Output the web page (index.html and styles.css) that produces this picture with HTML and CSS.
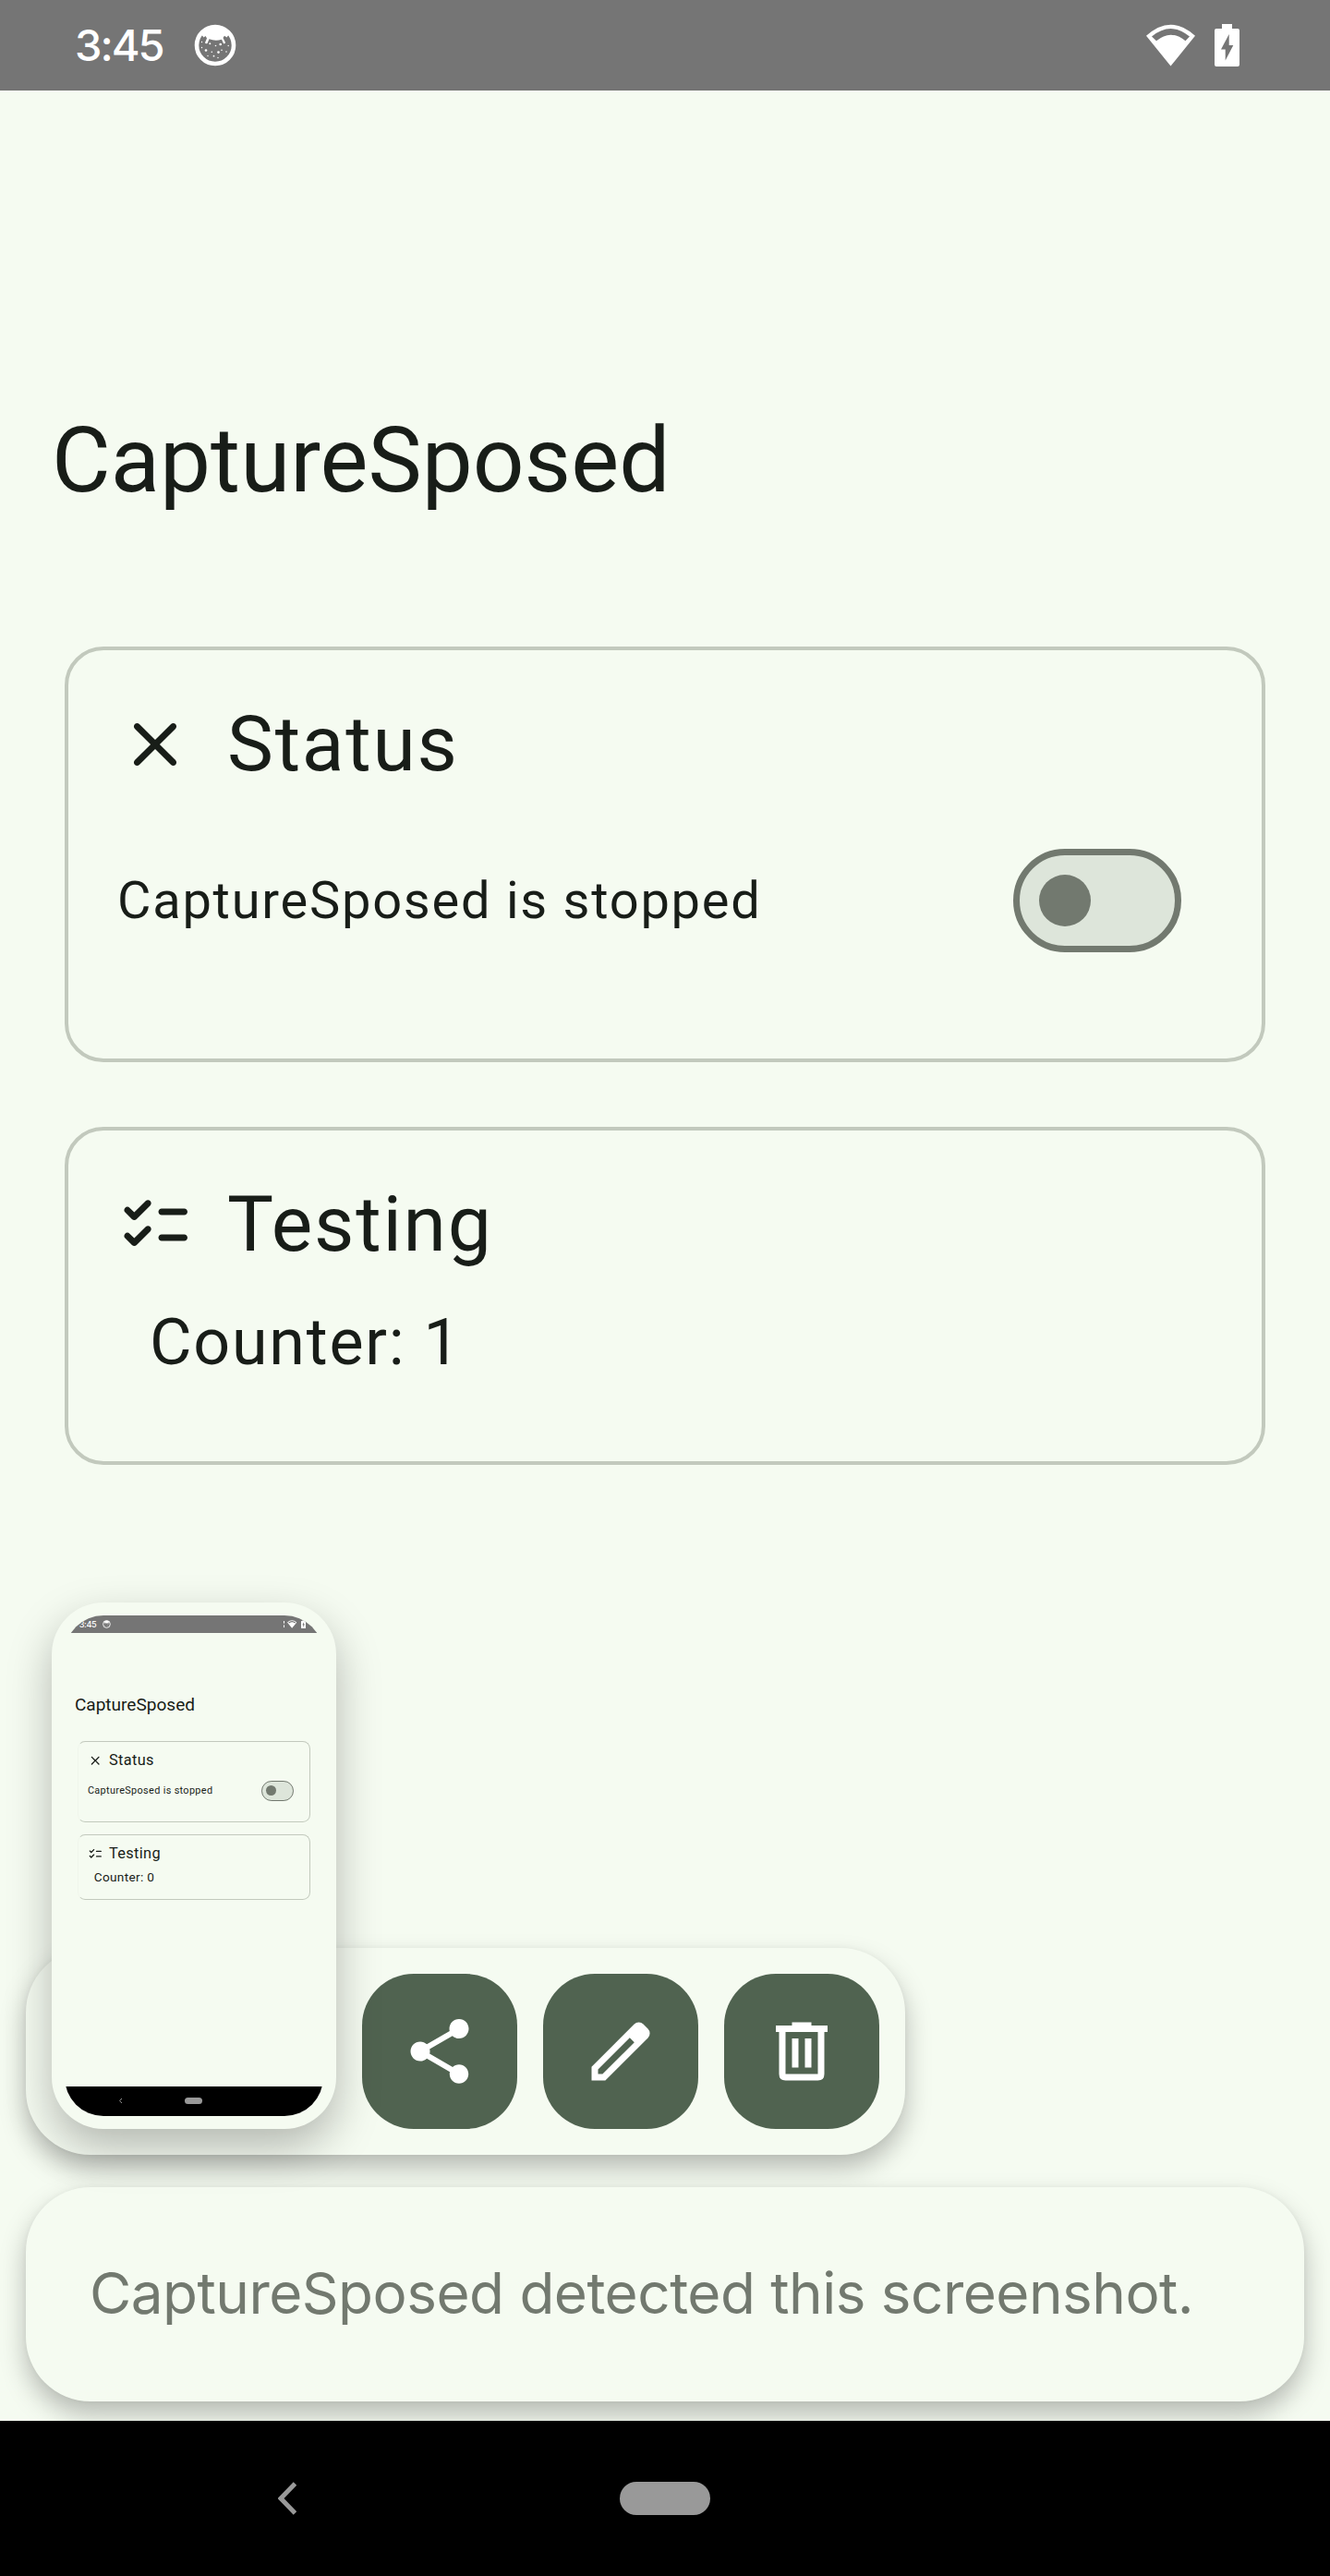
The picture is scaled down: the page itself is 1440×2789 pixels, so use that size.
FILE: index.html
```html
<!DOCTYPE html>
<html lang="en">
<head>
<meta charset="utf-8">
<title>CaptureSposed</title>
<link rel="stylesheet" href="styles.css">
</head>
<body>
<svg class="sprite" aria-hidden="true">
  <symbol id="i-cat" viewBox="0 0 46 46">
    <circle cx="23" cy="23" r="20" fill="none" stroke="currentColor" stroke-width="4.6"/>
    <path fill="currentColor" d="M7.5 10.5C16 1 30 1 38.500 10.500L35.500 14.500L33 12.800L31.500 15L34 20Q34 21.500 32 21.300L30 16.800Q23 19 16.500 16.300L14.500 21Q12.500 21.500 12 20.300L14 15.500L12.500 13L10.500 14.500Z"/>
    <g fill="currentColor"><circle cx="17.300" cy="21.300" r="1"/><circle cx="23.500" cy="23.500" r=".8"/><circle cx="28.700" cy="22" r="1.300"/><circle cx="13" cy="28.500" r="1.300"/><circle cx="8.500" cy="25.500" r=".7"/><circle cx="8.500" cy="19.500" r=".7"/><circle cx="30" cy="28.200" r=".8"/><circle cx="26.500" cy="30.600" r="1.300"/><circle cx="19.300" cy="30.200" r=".8"/><circle cx="21.500" cy="34.700" r=".9"/><circle cx="15" cy="34.500" r=".7"/><circle cx="26" cy="36.500" r=".7"/><circle cx="35" cy="30" r=".8"/><circle cx="37.200" cy="23.500" r=".7"/></g>
  </symbol>
  <symbol id="i-wifi" viewBox="0 0 53 46">
    <path fill="currentColor" fill-rule="evenodd" d="M26.500 45.500L0 12.800Q26.500 -11.500 53 12.800ZM6 13.500L11 18.300Q26.500 5 42.500 18.300L47 13.500Q26.500 -3.500 6 13.500Z"/>
  </symbol>
  <symbol id="i-battery" viewBox="0 0 27 46">
    <path fill="currentColor" fill-rule="evenodd" d="M8 0H19V5H25Q27 5 27 7V44Q27 46 25 46H2Q0 46 0 44V7Q0 5 2 5H8ZM15.700 11L7 27.500H11.700V39.500L20.300 23H15.700Z"/>
  </symbol>
  <symbol id="i-close" viewBox="0 0 24 24">
    <path fill="currentColor" d="M18.300 5.710c-.39-.39-1.020-.39-1.410 0L12 10.590 7.110 5.700c-.39-.39-1.020-.39-1.410 0s-.39 1.020 0 1.410L10.590 12 5.700 16.890c-.39.39-.39 1.020 0 1.410s1.020.39 1.410 0L12 13.410l4.890 4.890c.39.39 1.020.39 1.410 0s.39-1.020 0-1.410L13.410 12l4.890-4.890c.38-.38.38-1.020 0-1.400z"/>
  </symbol>
  <symbol id="i-checklist" viewBox="0 0 24 24">
    <path fill="currentColor" d="M22 8c0-.55-.45-1-1-1h-7c-.55 0-1 .45-1 1s.45 1 1 1h7c.55 0 1-.45 1-1zm-9 8c0 .55.45 1 1 1h7c.55 0 1-.45 1-1s-.45-1-1-1h-7c-.55 0-1 .45-1 1zM10.470 4.630c.39.39.39 1.020 0 1.410l-4.230 4.250c-.39.39-1.020.39-1.420 0L2.700 8.160c-.39-.39-.39-1.020 0-1.410s1.020-.39 1.410 0l1.420 1.420 3.540-3.540c.38-.38 1.020-.38 1.400 0zm.01 8.010c.39.39.39 1.020 0 1.410L6.250 18.300c-.39.39-1.020.39-1.420 0L2.700 16.160c-.39-.39-.39-1.020 0-1.410s1.020-.39 1.410 0l1.420 1.420 3.540-3.540c.38-.38 1.020-.38 1.410.01z"/>
  </symbol>
  <symbol id="i-share" viewBox="0 0 24 24">
    <path fill="currentColor" d="M18 16.080c-.76 0-1.440.3-1.960.77L8.910 12.700c.05-.23.09-.46.09-.7s-.04-.47-.09-.7l7.050-4.110c.54.5 1.250.81 2.040.81 1.660 0 3-1.340 3-3s-1.340-3-3-3-3 1.340-3 3c0 .24.04.47.09.7L8.040 9.810C7.500 9.310 6.790 9 6 9c-1.660 0-3 1.340-3 3s1.340 3 3 3c.79 0 1.500-.31 2.040-.81l7.120 4.160c-.05.21-.08.43-.08.650 0 1.610 1.310 2.920 2.920 2.920s2.920-1.310 2.920-2.920-1.310-2.920-2.920-2.920z"/>
  </symbol>
  <symbol id="i-edit" viewBox="0 0 24 24">
    <path fill="currentColor" fill-rule="evenodd" d="M3 21V16.750L16.200 3.570A2 2 0 0 1 19 3.570L20.430 5A2 2 0 0 1 20.430 7.830L7.250 21ZM5 17.600V19H6.400L16.230 9.200L14.800 7.770Z"/>
  </symbol>
  <symbol id="i-delete" viewBox="0 0 24 24">
    <path fill="currentColor" fill-rule="evenodd" d="M7 21Q5 21 5 19V6H4V4H9V3H15V4H20V6H19V19Q19 21 17 21ZM7 6V19H17V6ZM9 8H11V17H9ZM13 8H15V17H13Z"/>
  </symbol>
  <symbol id="i-back" viewBox="0 0 20 36">
    <path fill="none" stroke="currentColor" stroke-width="5" d="M18.500 2L3 18L18.500 34"/>
  </symbol>
</svg>

<div class="screen">
  <header class="statusbar">
    <span class="clock">3:45</span>
    <svg class="ic-cat"><use href="#i-cat"/></svg>
    <svg class="ic-wifi"><use href="#i-wifi"/></svg>
    <svg class="ic-battery"><use href="#i-battery"/></svg>
  </header>
  <main class="content">
    <h1 class="title">CaptureSposed</h1>
    <section class="card card-status">
      <h2 class="card-head"><svg class="icon"><use href="#i-close"/></svg>Status</h2>
      <div class="switch-row">CaptureSposed is stopped<span class="switch"><span class="thumb"></span></span></div>
    </section>
    <section class="card card-testing">
      <h2 class="card-head"><svg class="icon"><use href="#i-checklist"/></svg>Testing</h2>
      <p class="counter">Counter: 1</p>
    </section>
  </main>

  <aside class="overlay">
    <div class="actions">
      <button class="action"><svg class="icon"><use href="#i-share"/></svg></button>
      <button class="action"><svg class="icon"><use href="#i-edit"/></svg></button>
      <button class="action"><svg class="icon"><use href="#i-delete"/></svg></button>
    </div>
    <div class="message">CaptureSposed detected this screenshot.</div>
    <div class="preview">
      <div class="preview-clip">
        <div class="screen mini">
          <header class="statusbar">
            <span class="clock">3:45</span>
            <svg class="ic-cat"><use href="#i-cat"/></svg>
            <span class="vibrate"></span>
            <svg class="ic-wifi"><use href="#i-wifi"/></svg>
            <svg class="ic-battery"><use href="#i-battery"/></svg>
          </header>
          <div class="content">
            <div class="title">CaptureSposed</div>
            <div class="card card-status">
              <div class="card-head"><svg class="icon"><use href="#i-close"/></svg>Status</div>
              <div class="switch-row">CaptureSposed is stopped<span class="switch"><span class="thumb"></span></span></div>
            </div>
            <div class="card card-testing">
              <div class="card-head"><svg class="icon"><use href="#i-checklist"/></svg>Testing</div>
              <div class="counter">Counter: 0</div>
            </div>
          </div>
          <div class="navbar"><svg class="back"><use href="#i-back"/></svg><span class="pill"></span></div>
        </div>
      </div>
    </div>
  </aside>

  <nav class="navbar"><svg class="back"><use href="#i-back"/></svg><span class="pill"></span></nav>
</div>
</body>
</html>
```
FILE: styles.css
```css
* { box-sizing: border-box; }
body { margin: 0; background: #f5fbf1; }
.sprite { position: absolute; width: 0; height: 0; }
svg { display: block; flex: none; }

.screen {
  position: relative;
  display: flex;
  flex-direction: column;
  width: 1440px;
  height: 2789px;
  overflow: hidden;
  background: #f5fbf1;
  color: #181d18;
  font-family: Roboto, "Liberation Sans", sans-serif;
  letter-spacing: 1.75px;
}

/* status bar */
.statusbar {
  display: flex;
  align-items: center;
  height: 98px;
  padding: 0 98px 0 81px;
  background: #757575;
  color: #fff;
}
.clock {
  width: 129px;
  font: 550 47px/98px Inter, Roboto, sans-serif;
  letter-spacing: -2px;
}
.ic-cat { width: 46px; height: 46px; margin-right: auto; }
.ic-wifi { width: 53px; height: 46px; margin-right: 21px; }
.ic-battery { width: 27px; height: 46px; }

/* page */
.content {
  flex: 1;
  display: flex;
  flex-direction: column;
  padding: 338px 70px 0;
}
.title {
  margin: 0 0 138px -14px;
  font-size: 98px;
  font-weight: 400;
  line-height: 126px;
  letter-spacing: 0;
}
.card {
  padding: 60px 87px 0 52px;
  border: 4px solid #c2c9bd;
  border-radius: 42px;
}
.card-status { height: 450px; margin-bottom: 70px; }
.card-testing { height: 366px; }
.card-head {
  display: flex;
  align-items: center;
  gap: 36px;
  height: 84px;
  margin: 0;
  font-size: 84px;
  font-weight: 400;
  line-height: 84px;
}
.icon { width: 84px; height: 84px; }
.switch-row {
  display: flex;
  align-items: center;
  justify-content: space-between;
  height: 112px;
  margin-top: 71px;
  padding-left: 1px;
  font-size: 56px;
}
.switch {
  display: flex;
  align-items: center;
  width: 182px;
  height: 112px;
  padding-left: 21px;
  border: 7px solid #72796f;
  border-radius: 56px;
  background: #dde5da;
}
.thumb { width: 56px; height: 56px; border-radius: 50%; background: #72796f; }
.counter {
  margin: 43px 0 0 36px;
  font-size: 70px;
  line-height: 84px;
}

/* navigation bar */
.navbar {
  position: relative;
  display: flex;
  align-items: center;
  height: 168px;
  background: #000;
  color: #999;
}
.back { width: 20px; height: 36px; margin: 0 350px 0 301px; }
.pill { width: 98px; height: 36px; border-radius: 18px; background: #999; }

/* screenshot overlay */
.overlay {
  position: absolute;
  left: 28px;
  bottom: 189px;
  display: flex;
  flex-direction: column;
  gap: 35px;
  width: 1384px;
}
.actions {
  display: flex;
  justify-content: flex-end;
  gap: 28px;
  width: 952px;
  height: 224px;
  padding: 28px;
  border-radius: 70px;
  background: #f5fbf1;
  box-shadow: 0 14px 28px rgba(0, 0, 0, .26), 0 0 6px rgba(0, 0, 0, .04);
}
.action {
  display: grid;
  place-items: center;
  width: 168px;
  height: 168px;
  padding: 0;
  border: 0;
  border-radius: 56px;
  background: #506350;
  color: #fff;
}
.message {
  height: 232px;
  padding-left: 69px;
  border-radius: 70px;
  background: #f5fbf1;
  box-shadow: 0 14px 28px rgba(0, 0, 0, .26), 0 0 6px rgba(0, 0, 0, .04);
  color: #72796f;
  font: 400 62px/229px Inter, Roboto, sans-serif;
  letter-spacing: -0.52px;
  white-space: nowrap;
}
.preview {
  position: absolute;
  left: 28px;
  bottom: 295px;
  width: 308px;
  height: 570px;
  padding: 14px;
  border-radius: 56px;
  background: #f5fbf1;
  box-shadow: 0 20px 48px rgba(0, 0, 0, .27);
}
.preview-clip {
  width: 280px;
  height: 542px;
  overflow: hidden;
  border-radius: 42px;
}
.mini { zoom: .19444; }
.mini .card { border-left-color: #f0f6ec; }
.mini .vibrate {
  width: 14px;
  height: 40px;
  margin-right: 10px;
  border-left: 8px dashed #fff;
}
```
